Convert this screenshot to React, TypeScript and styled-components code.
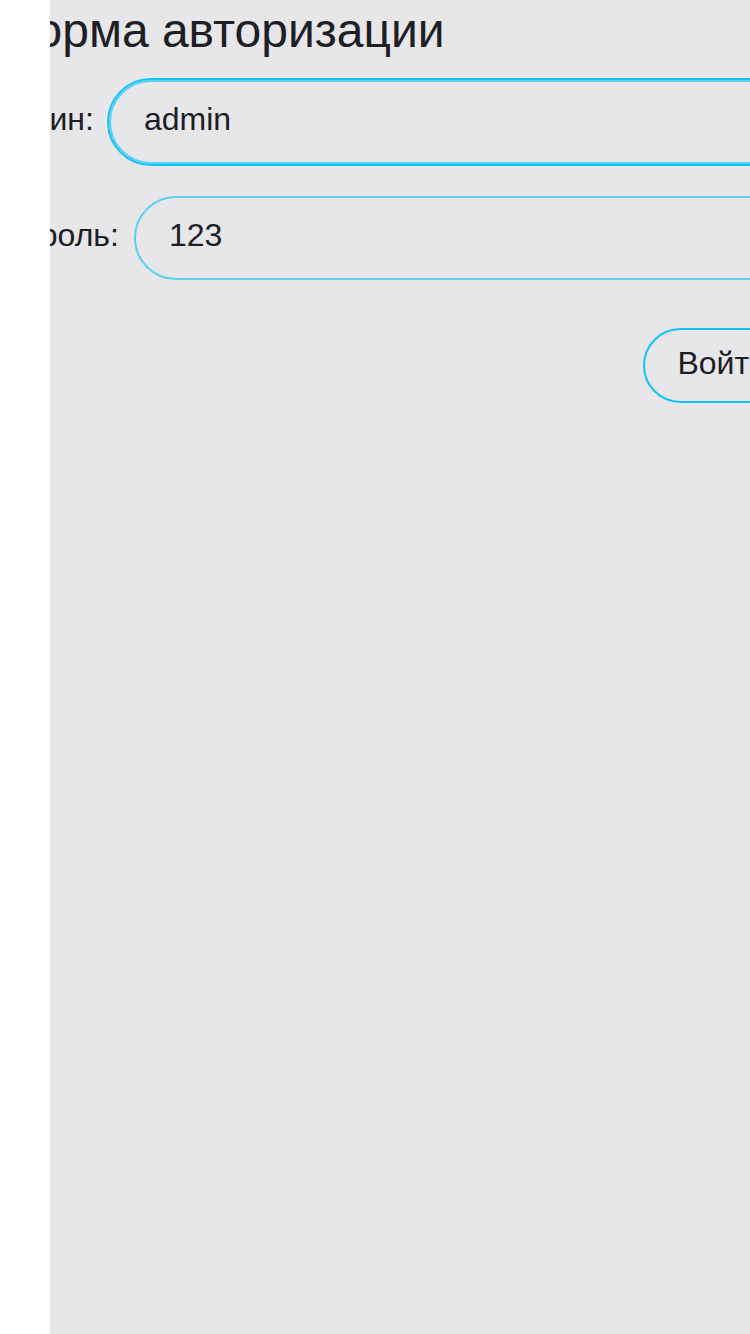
import React from "react";
import styled, { createGlobalStyle } from "styled-components";

const Global = createGlobalStyle`
  html, body { margin: 0; padding: 0; overflow: hidden; background: #ffffff; }
  * { box-sizing: border-box; }
`;

const Page = styled.div`
  position: relative;
  width: 750px;
  height: 1334px;
  background: #e7e7ea;
  overflow: hidden;
  font-family: "Liberation Sans", Arial, sans-serif;
  color: #1c2024;
`;

const SideStrip = styled.div`
  position: absolute;
  left: 0;
  top: 0;
  width: 50px;
  height: 100%;
  background: #ffffff;
`;

const Form = styled.form`
  width: 802px;
  display: flex;
  flex-direction: column;
  margin: 0 0 0 -1px;
`;

const Title = styled.h1`
  margin: 0;
  font-size: 48px;
  line-height: 62px;
  font-weight: 400;
`;

const Row = styled.div<{ $top: number }>`
  display: flex;
  align-items: baseline;
  gap: 15px;
  margin-top: ${(p) => p.$top}px;
`;

const Label = styled.label`
  font-size: 32px;
  white-space: nowrap;
`;

const Input = styled.input<{ $focused?: boolean }>`
  flex: 1;
  height: 84px;
  padding: 0 33px 6px;
  border: 2px solid #5ad2f4;
  border-radius: 42px;
  background: transparent;
  font-family: "Liberation Sans", Arial, sans-serif;
  font-size: 32px;
  color: #1c2024;
  outline: ${(p) => (p.$focused ? "2px solid #12c3fb" : "none")};
  outline-offset: 0;
`;

const Actions = styled.div`
  display: flex;
  justify-content: flex-end;
  margin-top: 48px;
`;

const Button = styled.button`
  height: 75px;
  padding: 0 32px 4px;
  border: 2px solid #12c3fb;
  border-radius: 38px;
  background: transparent;
  font-family: "Liberation Sans", Arial, sans-serif;
  font-size: 32px;
  color: #1c2024;
`;

export default function App() {
  return (
    <>
      <Global />
      <Page>
        <Form onSubmit={(e) => e.preventDefault()}>
          <Title>Форма авторизации</Title>
          <Row $top={18}>
            <Label htmlFor="login">Логин:</Label>
            <Input id="login" $focused defaultValue="admin" />
          </Row>
          <Row $top={32}>
            <Label htmlFor="pass">Пароль:</Label>
            <Input id="pass" defaultValue="123" />
          </Row>
          <Actions>
            <Button type="submit">Войти</Button>
          </Actions>
        </Form>
        <SideStrip />
      </Page>
    </>
  );
}
